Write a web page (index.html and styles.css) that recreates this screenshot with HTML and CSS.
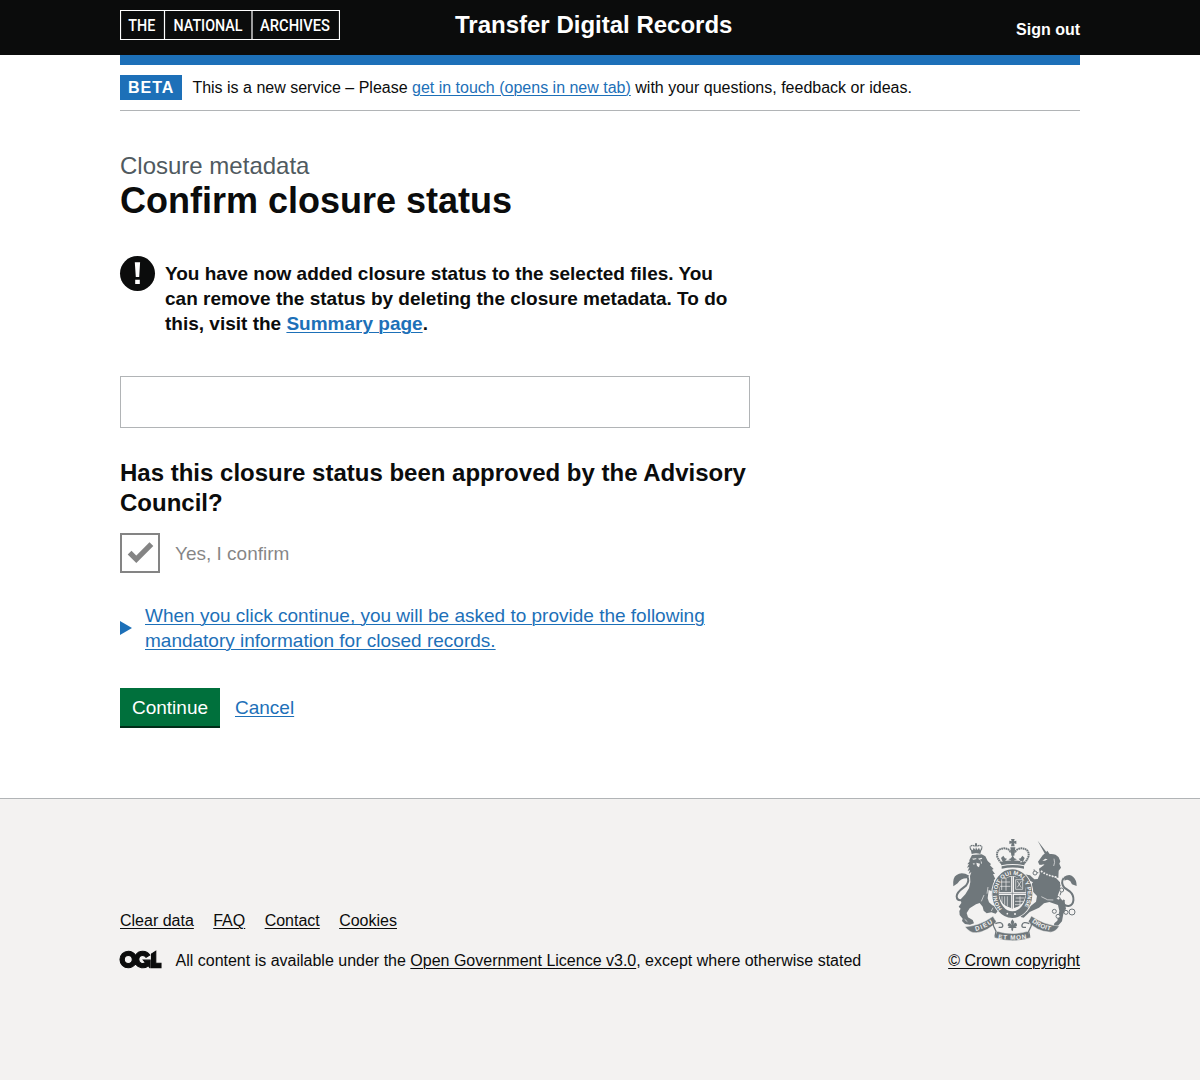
FILE: index.html
```html
<!DOCTYPE html>
<html lang="en">
<head>
<meta charset="utf-8">
<title>Confirm closure status – Transfer Digital Records</title>
<link rel="stylesheet" href="styles.css">
</head>
<body>
<header class="header">
  <div class="container header-inner">
    <a class="logo" href="#" aria-label="The National Archives">
      <svg width="220" height="30" viewBox="0 0 220 30">
        <path d="M.5.5h219v29H.5zM44.5 0v30M132 0v30" fill="none" stroke="#fff" stroke-width="1.2"/>
        <g class="logo-text">
          <text x="8.3" y="21.2" textLength="27" lengthAdjust="spacingAndGlyphs">THE</text>
          <text x="53.5" y="21.2" textLength="69" lengthAdjust="spacingAndGlyphs">NATIONAL</text>
          <text x="140" y="21.2" textLength="70" lengthAdjust="spacingAndGlyphs">ARCHIVES</text>
        </g>
      </svg>
    </a>
    <a class="service-name" href="#">Transfer Digital Records</a>
    <a class="sign-out" href="#">Sign out</a>
  </div>
</header>
<div class="container">
  <div class="phase-banner">
    <strong class="tag">BETA</strong>
    <span>This is a new service – Please <a class="link" href="#">get in touch (opens in new tab)</a> with your questions, feedback or ideas.</span>
  </div>
  <main class="main">
    <p class="caption">Closure metadata</p>
    <h1 class="heading-l">Confirm closure status</h1>
    <div class="warning">
      <span class="warning-icon"><svg width="35" height="35" viewBox="0 0 35 35"><path d="M14.8 6.3h5.3l-.9 14.8h-3.4zM15.2 23.8h4.6v4.3h-4.6z" fill="#fff"/></svg></span>
      <strong class="warning-text">You have now added closure status to the selected files. You can remove the status by deleting the closure metadata. To do this, visit the <a class="link" href="#">Summary page</a>.</strong>
    </div>
    <div class="file-list"></div>
    <h2 class="heading-m">Has this closure status been approved by the Advisory Council?</h2>
    <div class="checkbox">
      <span class="checkbox-box"><svg width="36" height="36" viewBox="0 0 36 36"><path d="M7.6 17.7l6.7 6.6L29.4 9.2" fill="none" stroke="#0b0c0c" stroke-width="5.4"/></svg></span>
      <span>Yes, I confirm</span>
    </div>
    <div class="details">
      <svg class="arrow" width="12" height="14" viewBox="0 0 12 14"><path d="M0 0l12 7-12 7z" fill="#1d70b8"/></svg>
      <a class="link" href="#">When you click continue, you will be asked to provide the following mandatory information for closed records.</a>
    </div>
    <div class="actions">
      <button class="button" type="button">Continue</button>
      <a class="link" href="#">Cancel</a>
    </div>
  </main>
</div>
<footer class="footer">
  <div class="container footer-inner">
    <div>
      <nav class="footer-links"><a href="#">Clear data</a><a href="#">FAQ</a><a href="#">Contact</a><a href="#">Cookies</a></nav>
      <div class="licence">
        <svg class="ogl" width="41" height="17" viewBox="0 0 483.2 195.7"><path fill="#0b0c0c" stroke="#0b0c0c" stroke-width="13" d="M421.5 142.8V.1l-50.7 32.3v161.1h112.4v-50.7zm-122.3-9.6A47.12 47.12 0 0 1 221 97.8c0-26 21.1-47.1 47.1-47.1 16.7 0 31.4 8.7 39.7 21.8l42.7-27.2A97.63 97.63 0 0 0 268.1 0c-36.5 0-68.3 20.1-85.1 49.7A98 98 0 0 0 97.8 0C43.9 0 0 43.9 0 97.8s43.9 97.8 97.8 97.8c36.5 0 68.3-20.1 85.1-49.7a97.76 97.76 0 0 0 149.6 25.4l19.4 22.2h3v-87.8h-80l24.3 27.5zM97.8 145c-26 0-47.1-21.1-47.1-47.1s21.1-47.1 47.1-47.1 47.1 21.1 47.1 47.1S123.8 145 97.8 145"/></svg>
        <span>All content is available under the <a href="#">Open Government Licence v3.0</a>, except where otherwise stated</span>
      </div>
    </div>
    <a class="copyright" href="#">
      <svg class="crest" width="125" height="102" viewBox="36 27 375 306">
        <defs>
          <path id="garter" d="M186 237A46 59 0 1 1 248 237"/>
          <path id="motto-left" d="M107 303Q136 296 164 275"/>
          <path id="motto-mid" d="M174 326Q218 333 264 325"/>
          <path id="motto-right" d="M275 276Q302 297 336 303"/>
        </defs>
        <!-- royal crown -->
        <path class="ink" d="M213 27h11l-2 7 7-2v10l-7-2 2 9h-11l2-9-7 2V32l7 2zM211 52h15l-3 25h-9zM181 96q37-10 75 0l-3 10q-35-8-69 0zM185 109q33-8 67 0v7q-34-7-67 0zM190 77l5 8 6 1-5 6-1 6-8-5-4-9zM247 77l-5 8-6 1 5 6 1 6 8-5 4-9zM218 76l5 9 8 3-8 3-5 5-5-5-8-3 8-3z"/>
        <path class="beads" d="M184 99q-14-15-13-27c2-22 37-22 41-4M253 99q14-15 13-27c-2-22-37-22-41-4"/>
        <!-- lion -->
        <g transform="translate(30 24)">
          <path class="beads thin" d="M63 36Q56 24 68 22L76 25M93 36Q100 24 88 22L80 25"/>
          <path class="ink" d="M75 16h6v9h-6zM62 34l6 3 3-8 5 7 2-9 4 9 5-7 3 8 5-3-4 14q-13-5-26 0z"/>
          <path class="ink" d="M66 51L95 49 106 55 113 69 123 78 120 82 131 93 126 95 135 108 129 108 136 123 131 126 138 142 140 168 132 184 125 172 126 160 116 156 113 181 117 193 127 202 139 207 144 218 137 227 124 223 110 226 101 218 98 206 89 195 78 199 59 211 50 225 54 238 68 246 72 256 60 260 45 258 36 249 38 242 29 231 28 219 32 212 26 206 34 195 32 184 46 169 57 151 61 132 60 114 64 102 56 108 60 96 53 99 58 87 51 89 57 78 52 79 60 68 57 68z"/>
          <path class="ink" d="M10 145Q7 118 20 111 35 100 58 113L50 121Q32 121 23 136z"/>
          <path class="tail" d="M51 115Q60 127 48 143C35 153 20 161 20 175 21 190 39 192 54 174"/>
          <path class="paper" d="M66 62l12-1 2 2-10 2zM84 62l11-3 2 3-9 3zM79 74l11 3-3 11-6-4zM92 65l4 11-3 1zM68 76l8 1-5 3z"/>
          <path class="cut" d="M114 147l-3 20M102 171l-8 19M44 244l8 7M129 209l-5 10"/>
        </g>
        <!-- unicorn -->
        <g transform="translate(216 24)">
          <path class="ink" d="M77 8l30 39-6 5zM106 38l7 10q18-2 27 10l5 12-3 7 5 12-7 9-1 22-48-16-7 6-3-18 15-11-14-1-4-9 14-19 8-7z"/>
          <path class="ink" d="M87 100l45 20 12 13 1 18-8 23 21 19 4 19-8 16-4 22-12 13-13 2 2-9 9-8 6-29-4-18-26-9-16 4-15 13-28 13-18 17-9-2-1-11 31-22 16-13 3-17-18-19-14 3-12-10 4-8 20 3 8-10-14-7-17 1-4-10 9-8 17 3 13 12 10-1z"/>
          <path class="ink" d="M155 117q18-11 28-1 11 9 11 28l-14-5-5-9q-8-8-17-2z"/>
          <path class="tail" d="M155 120Q145 134 157 149L173 160C190 175 187 201 170 204 154 205 151 193 157 186"/>
          <path class="paper" d="M91 68l9-6 7 2-8 4zM88 80l10-2-4 3z"/>
          <path class="cut" d="M126 62q4 12-1 22M88 176q20 14 36 10"/>
          <path class="collar" d="M87 99Q110 116 137 117"/>
          <path class="chain" d="M79 104Q67 106 66 94M137 130l8 13M148 160l-4 12"/>
          <g class="chain"><circle cx="69" cy="105" r="6"/><circle cx="149" cy="156" r="6"/><circle cx="139" cy="181" r="5"/><circle cx="127" cy="220" r="6"/><circle cx="138" cy="235" r="6"/><circle cx="162" cy="223" r="6"/><circle cx="180" cy="222" r="9"/></g>
        </g>
        <!-- garter and arms -->
        <ellipse cx="217" cy="191" rx="63" ry="75" class="paper"/>
        <ellipse cx="217" cy="191" rx="50" ry="63" fill="none" stroke="#6f777b" stroke-width="20"/>
        <ellipse cx="217" cy="189" rx="41" ry="49" class="paper"/>
        <path class="ink" d="M179 161q11-18 34-21v46h-35zM222 140q23 3 34 21l1 25h-35zM177 195h36v39q-30-7-36-39zM222 195h35q-5 32-35 39z"/>
        <path class="cut" d="M182 156h28M180 169h31M185 148v32M198 144v38M227 149h21v29h-21zM232 153l12 20m-12-1l12-19M186 199v18M194 199v25M202 199v30M227 204h27M225 214h25M225 224h17M240 199v29"/>
        <path class="details-line" d="M176 190h82M217 139v97"/>
        <text class="motto garter"><textPath href="#garter" textLength="250" lengthAdjust="spacingAndGlyphs">HONI SOIT QUI MAL Y PENSE</textPath></text>
        <circle class="paper" cx="202" cy="251" r="2.5"/><circle class="paper" cx="225" cy="252" r="3"/>
        <!-- ribbon -->
        <path class="ribbon" d="M75 290q44-2 84-31l10 17q-26 29-60 32-18 3-34-18zM358 288q-44-2-84-30l-9 17q26 29 62 31 18 3 31-18zM171 304q46 13 93 0l8 19q-54 18-109 0z"/>
        <path class="ribbon-edge" d="M166 272q-9 6-5 17l7 15-3 16M268 272q9 6 5 17l-7 15 3 16M166 281q19-8 22 4 2 9-12 7M268 281q-19-8-22 4-2 9 12 7"/>
        <path class="ink" d="M217 268l6 8-3 9q5-11 10-4 4 8-7 10h6v3h-9l-1 7-2 3-3-4v-6h-9v-3h7q-12-1-8-9 5-7 11 3l-3-9z"/>
        <text class="motto"><textPath href="#motto-left" textLength="57">DIEU</textPath></text>
        <text class="motto"><textPath href="#motto-mid" textLength="86">ET MON</textPath></text>
        <text class="motto"><textPath href="#motto-right" textLength="62">DROIT</textPath></text>
      </svg>
      <span>© Crown copyright</span>
    </a>
  </div>
</footer>
</body>
</html>
```
FILE: styles.css
```css
* { box-sizing: border-box; }
body { margin: 0; min-height: 1080px; display: flex; flex-direction: column; background: #fff; color: #0b0c0c; font: 16px/20px "Liberation Sans", Arial, sans-serif; -webkit-font-smoothing: antialiased; }
p, h1, h2 { margin: 0; }
svg { display: block; }
.container { width: 960px; margin: 0 auto; }
.link { color: #1d70b8; text-decoration: underline; text-decoration-thickness: 1px; text-underline-offset: .1em; }
.header { height: 55px; background: #0b0c0c; }
.header-inner { height: 65px; display: grid; grid-template-columns: 335px 1fr auto; align-items: start; padding-top: 10px; border-bottom: 10px solid #1d70b8; }
.header a { color: #fff; text-decoration: none; font-weight: 700; }
.logo-text { fill: #fff; font: 500 16.8px Roboto, sans-serif; }
.service-name { font-size: 24px; line-height: 30px; }
.header .sign-out { padding-top: 10px; }
.phase-banner { margin-top: 10px; height: 46px; padding: 10px 0; display: flex; align-items: center; gap: 10px; border-bottom: 1px solid #b1b4b6; }
.tag { height: 25px; padding: 0 8px; line-height: 25px; letter-spacing: 1px; color: #fff; background: #1d70b8; }
.main { width: 630px; padding-top: 40px; font-size: 19px; line-height: 25px; }
.caption { font-size: 24px; line-height: 30px; color: #505a5f; }
.heading-l { font-size: 36px; line-height: 40px; }
.warning { display: flex; gap: 10px; margin-top: 35px; }
.warning-icon { width: 35px; height: 35px; flex: none; background: #0b0c0c; border-radius: 50%; }
.warning-text { padding-top: 5px; width: 570px; }
.file-list { height: 52px; margin-top: 40px; border: 1px solid #b1b4b6; }
.heading-m { margin-top: 30px; font-size: 24px; line-height: 30px; }
.checkbox { display: flex; align-items: center; gap: 15px; margin-top: 15px; opacity: .5; }
.checkbox-box { width: 40px; height: 40px; border: 2px solid #0b0c0c; }
.details { display: flex; align-items: center; gap: 13px; margin-top: 30px; }
.arrow { flex: none; }
.actions { display: flex; gap: 15px; margin-top: 35px; align-items: flex-start; }
.actions .link { padding-top: 7px; }
.button { width: 100px; height: 38px; padding: 0; border: 0; font: inherit; color: #fff; background: #00703c; box-shadow: 0 2px 0 #002d18; }
.footer { flex: 1; margin-top: 72px; padding-top: 40px; border-top: 1px solid #b1b4b6; background: #f3f2f1; }
.footer a { color: #0b0c0c; text-decoration-thickness: 1px; text-underline-offset: .1em; }
.footer-inner { display: flex; justify-content: space-between; align-items: flex-end; }
.footer-links { display: flex; gap: 19.4px; margin-bottom: 20px; }
.licence { display: flex; align-items: flex-start; gap: 14.5px; }
.ogl { overflow: visible; }
.copyright { display: flex; flex-direction: column; align-items: center; gap: 10px; }
.ink { fill: #6f777b; }
.paper { fill: #f3f2f1; }
.cut { fill: none; stroke: #f3f2f1; stroke-width: 2; }
.beads { fill: none; stroke: #6f777b; stroke-width: 6; stroke-dasharray: 5 1.5; }
.beads.thin { stroke-width: 4; }
.collar { fill: none; stroke: #f3f2f1; stroke-width: 5; stroke-dasharray: 5 4; }
.tail { fill: none; stroke: #6f777b; stroke-width: 6; }
.chain { fill: #f3f2f1; stroke: #6f777b; stroke-width: 3; }
.details-line { fill: none; stroke: #6f777b; stroke-width: 2; }
.ribbon { fill: #6f777b; stroke: #f3f2f1; stroke-width: 1.5; }
.ribbon-edge { fill: none; stroke: #6f777b; stroke-width: 4; }
.motto { fill: #f3f2f1; font: 700 19px "Liberation Sans", sans-serif; }
.motto.garter { font-size: 17px; }
```
